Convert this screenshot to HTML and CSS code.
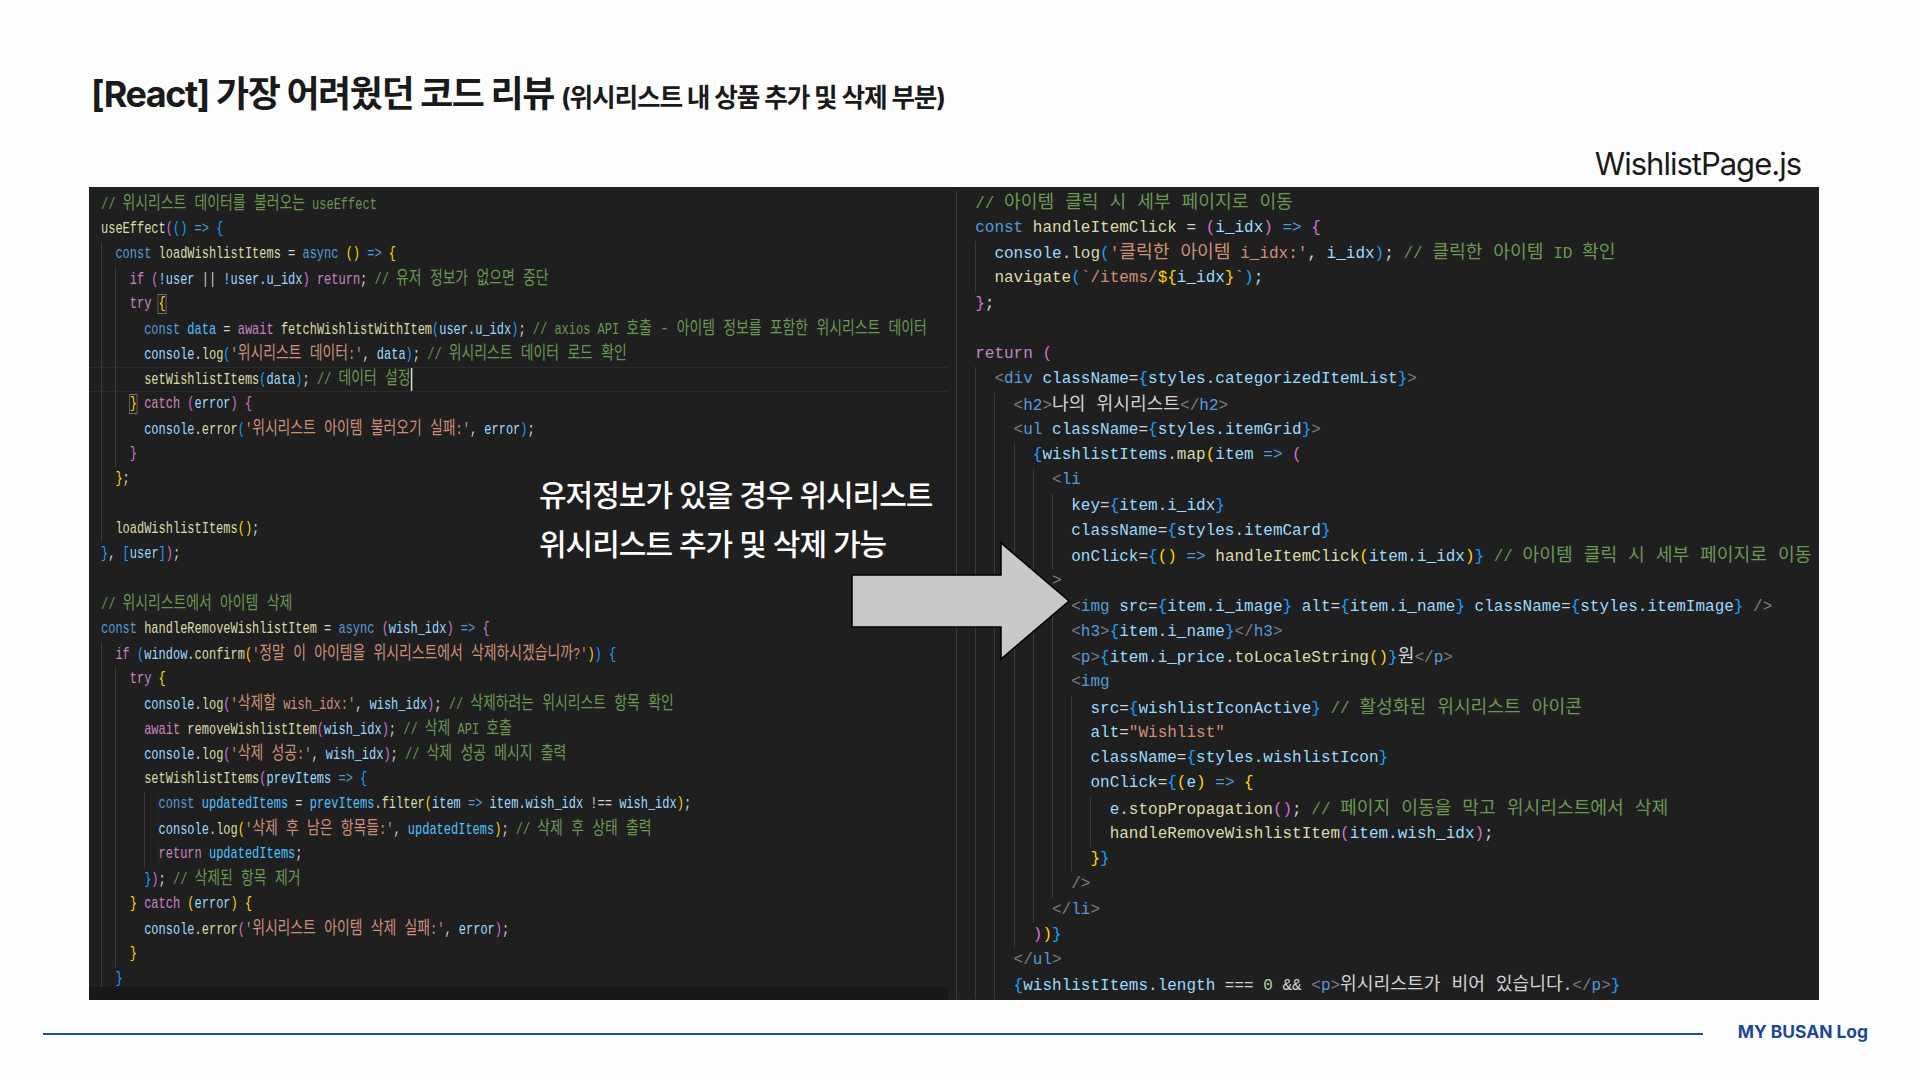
FILE: index.html
```html
<!DOCTYPE html>
<html lang="ko">
<head>
<meta charset="utf-8">
<title>[React] 가장 어려웠던 코드 리뷰</title>
<link rel="stylesheet" href="styles.css">
</head>
<body>
<div class="slide">
  <h1 class="title">[React] 가장 어려웠던 코드 리뷰 <small class="subtitle">(위시리스트 내 상품 추가 및 삭제 부분)</small></h1>
  <div class="file-name">WishlistPage.js</div>
  <div class="panel">
    <section class="pane-left">
      <div class="squeeze">
        <div class="code code-left">
<div class="l n0"><span class="c">// <span class="h">위시리스트 데이터를 불러오는</span> useEffect</span></div>
<div class="l n0"><span class="f">useEffect</span><span class="m">(</span><span class="b">()</span> <span class="k">=&gt;</span> <span class="b">{</span></div>
<div class="l n1"><span class="k">const</span> <span class="f">loadWishlistItems</span> = <span class="k">async</span> <span class="y">()</span> <span class="k">=&gt;</span> <span class="y">{</span></div>
<div class="l n2"><span class="p">if</span> <span class="m">(</span><span class="v">!user</span> || <span class="v">!user.u_idx</span><span class="m">)</span> <span class="p">return</span>; <span class="c">// <span class="h">유저 정보가 없으면 중단</span></span></div>
<div class="l n2"><span class="p">try</span> <span class="y box">{</span></div>
<div class="l n3"><span class="k">const</span> <span class="o">data</span> = <span class="p">await</span> <span class="f">fetchWishlistWithItem</span><span class="b">(</span><span class="v">user.u_idx</span><span class="b">)</span>; <span class="c">// axios API <span class="h">호출 - 아이템 정보를 포함한 위시리스트 데이터</span></span></div>
<div class="l n3"><span class="v">console</span>.<span class="f">log</span><span class="b">(</span><span class="s">'<span class="h">위시리스트 데이터</span>:'</span>, <span class="v">data</span><span class="b">)</span>; <span class="c">// <span class="h">위시리스트 데이터 로드 확인</span></span></div>
<div class="l n3 hl"><span class="f">setWishlistItems</span><span class="b">(</span><span class="v">data</span><span class="b">)</span>; <span class="c">// <span class="h">데이터 설정</span></span><span class="cursor"></span></div>
<div class="l n2"><span class="y box">}</span> <span class="p">catch</span> <span class="m">(</span><span class="v">error</span><span class="m">)</span> <span class="m">{</span></div>
<div class="l n3"><span class="v">console</span>.<span class="f">error</span><span class="b">(</span><span class="s">'<span class="h">위시리스트 아이템 불러오기 실패</span>:'</span>, <span class="v">error</span><span class="b">)</span>;</div>
<div class="l n2"><span class="m">}</span></div>
<div class="l n1"><span class="y">}</span>;</div>
<div class="l n1"></div>
<div class="l n1"><span class="f">loadWishlistItems</span><span class="y">()</span>;</div>
<div class="l n0"><span class="b">}</span>, <span class="b">[</span><span class="v">user</span><span class="b">]</span><span class="m">)</span>;</div>
<div class="l n0"></div>
<div class="l n0"><span class="c">// <span class="h">위시리스트에서 아이템 삭제</span></span></div>
<div class="l n0"><span class="k">const</span> <span class="f">handleRemoveWishlistItem</span> = <span class="k">async</span> <span class="m">(</span><span class="v">wish_idx</span><span class="m">)</span> <span class="k">=&gt;</span> <span class="m">{</span></div>
<div class="l n1"><span class="p">if</span> <span class="b">(</span><span class="v">window</span>.<span class="f">confirm</span><span class="y">(</span><span class="s">'<span class="h">정말 이 아이템을 위시리스트에서 삭제하시겠습니까</span>?'</span><span class="y">)</span><span class="b">)</span> <span class="b">{</span></div>
<div class="l n2"><span class="p">try</span> <span class="y">{</span></div>
<div class="l n3"><span class="v">console</span>.<span class="f">log</span><span class="m">(</span><span class="s">'<span class="h">삭제할</span> wish_idx:'</span>, <span class="v">wish_idx</span><span class="m">)</span>; <span class="c">// <span class="h">삭제하려는 위시리스트 항목 확인</span></span></div>
<div class="l n3"><span class="p">await</span> <span class="f">removeWishlistItem</span><span class="m">(</span><span class="v">wish_idx</span><span class="m">)</span>; <span class="c">// <span class="h">삭제</span> API <span class="h">호출</span></span></div>
<div class="l n3"><span class="v">console</span>.<span class="f">log</span><span class="m">(</span><span class="s">'<span class="h">삭제 성공</span>:'</span>, <span class="v">wish_idx</span><span class="m">)</span>; <span class="c">// <span class="h">삭제 성공 메시지 출력</span></span></div>
<div class="l n3"><span class="f">setWishlistItems</span><span class="m">(</span><span class="v">prevItems</span> <span class="k">=&gt;</span> <span class="b">{</span></div>
<div class="l n4"><span class="k">const</span> <span class="o">updatedItems</span> = <span class="o">prevItems</span>.<span class="f">filter</span><span class="y">(</span><span class="v">item</span> <span class="k">=&gt;</span> <span class="v">item.wish_idx</span> !== <span class="v">wish_idx</span><span class="y">)</span>;</div>
<div class="l n4"><span class="v">console</span>.<span class="f">log</span><span class="y">(</span><span class="s">'<span class="h">삭제 후 남은 항목들</span>:'</span>, <span class="o">updatedItems</span><span class="y">)</span>; <span class="c">// <span class="h">삭제 후 상태 출력</span></span></div>
<div class="l n4"><span class="p">return</span> <span class="o">updatedItems</span>;</div>
<div class="l n3"><span class="b">}</span><span class="m">)</span>; <span class="c">// <span class="h">삭제된 항목 제거</span></span></div>
<div class="l n2"><span class="y">}</span> <span class="p">catch</span> <span class="y">(</span><span class="v">error</span><span class="y">)</span> <span class="y">{</span></div>
<div class="l n3"><span class="v">console</span>.<span class="f">error</span><span class="m">(</span><span class="s">'<span class="h">위시리스트 아이템 삭제 실패</span>:'</span>, <span class="v">error</span><span class="m">)</span>;</div>
<div class="l n2"><span class="y">}</span></div>
<div class="l n1"><span class="b">}</span></div>
        </div>
      </div>
      <div class="scroll-strip"></div>
    </section>
    <section class="code code-right">
<div class="l n1"><span class="c">// <span class="h">아이템 클릭 시 세부 페이지로 이동</span></span></div>
<div class="l n1"><span class="k">const</span> <span class="f">handleItemClick</span> = <span class="m">(</span><span class="v">i_idx</span><span class="m">)</span> <span class="k">=&gt;</span> <span class="m">{</span></div>
<div class="l n2"><span class="v">console</span>.<span class="f">log</span><span class="b">(</span><span class="s">'<span class="h">클릭한 아이템</span> i_idx:'</span>, <span class="v">i_idx</span><span class="b">)</span>; <span class="c">// <span class="h">클릭한 아이템</span> ID <span class="h">확인</span></span></div>
<div class="l n2"><span class="f">navigate</span><span class="b">(</span><span class="s">`/items/</span><span class="y">${</span><span class="v">i_idx</span><span class="y">}</span><span class="s">`</span><span class="b">)</span>;</div>
<div class="l n1"><span class="m">}</span>;</div>
<div class="l n1"></div>
<div class="l n1"><span class="p">return</span> <span class="m">(</span></div>
<div class="l n2"><span class="g">&lt;</span><span class="k">div</span> <span class="v">className</span>=<span class="b">{</span><span class="v">styles.categorizedItemList</span><span class="b">}</span><span class="g">&gt;</span></div>
<div class="l n3"><span class="g">&lt;</span><span class="k">h2</span><span class="g">&gt;</span><span class="h">나의 위시리스트</span><span class="g">&lt;/</span><span class="k">h2</span><span class="g">&gt;</span></div>
<div class="l n3"><span class="g">&lt;</span><span class="k">ul</span> <span class="v">className</span>=<span class="b">{</span><span class="v">styles.itemGrid</span><span class="b">}</span><span class="g">&gt;</span></div>
<div class="l n4"><span class="b">{</span><span class="v">wishlistItems</span>.<span class="f">map</span><span class="y">(</span><span class="v">item</span> <span class="k">=&gt;</span> <span class="m">(</span></div>
<div class="l n5"><span class="g">&lt;</span><span class="k">li</span></div>
<div class="l n6"><span class="v">key</span>=<span class="b">{</span><span class="v">item.i_idx</span><span class="b">}</span></div>
<div class="l n6"><span class="v">className</span>=<span class="b">{</span><span class="v">styles.itemCard</span><span class="b">}</span></div>
<div class="l n6"><span class="v">onClick</span>=<span class="b">{</span><span class="y">()</span> <span class="k">=&gt;</span> <span class="f">handleItemClick</span><span class="y">(</span><span class="v">item.i_idx</span><span class="y">)</span><span class="b">}</span> <span class="c">// <span class="h">아이템 클릭 시 세부 페이지로 이동</span></span></div>
<div class="l n5"><span class="g">&gt;</span></div>
<div class="l n6"><span class="g">&lt;</span><span class="k">img</span> <span class="v">src</span>=<span class="b">{</span><span class="v">item.i_image</span><span class="b">}</span> <span class="v">alt</span>=<span class="b">{</span><span class="v">item.i_name</span><span class="b">}</span> <span class="v">className</span>=<span class="b">{</span><span class="v">styles.itemImage</span><span class="b">}</span> <span class="g">/&gt;</span></div>
<div class="l n6"><span class="g">&lt;</span><span class="k">h3</span><span class="g">&gt;</span><span class="b">{</span><span class="v">item.i_name</span><span class="b">}</span><span class="g">&lt;/</span><span class="k">h3</span><span class="g">&gt;</span></div>
<div class="l n6"><span class="g">&lt;</span><span class="k">p</span><span class="g">&gt;</span><span class="b">{</span><span class="v">item.i_price</span>.<span class="f">toLocaleString</span><span class="y">()</span><span class="b">}</span><span class="h">원</span><span class="g">&lt;/</span><span class="k">p</span><span class="g">&gt;</span></div>
<div class="l n6"><span class="g">&lt;</span><span class="k">img</span></div>
<div class="l n7"><span class="v">src</span>=<span class="b">{</span><span class="v">wishlistIconActive</span><span class="b">}</span> <span class="c">// <span class="h">활성화된 위시리스트 아이콘</span></span></div>
<div class="l n7"><span class="v">alt</span>=<span class="s">"Wishlist"</span></div>
<div class="l n7"><span class="v">className</span>=<span class="b">{</span><span class="v">styles.wishlistIcon</span><span class="b">}</span></div>
<div class="l n7"><span class="v">onClick</span>=<span class="b">{</span><span class="y">(</span><span class="v">e</span><span class="y">)</span> <span class="k">=&gt;</span> <span class="y">{</span></div>
<div class="l n8"><span class="v">e</span>.<span class="f">stopPropagation</span><span class="m">()</span>; <span class="c">// <span class="h">페이지 이동을 막고 위시리스트에서 삭제</span></span></div>
<div class="l n8"><span class="f">handleRemoveWishlistItem</span><span class="m">(</span><span class="v">item.wish_idx</span><span class="m">)</span>;</div>
<div class="l n7"><span class="y">}</span><span class="b">}</span></div>
<div class="l n6"><span class="g">/&gt;</span></div>
<div class="l n5"><span class="g">&lt;/</span><span class="k">li</span><span class="g">&gt;</span></div>
<div class="l n4"><span class="m">)</span><span class="y">)</span><span class="b">}</span></div>
<div class="l n3"><span class="g">&lt;/</span><span class="k">ul</span><span class="g">&gt;</span></div>
<div class="l n3"><span class="b">{</span><span class="v">wishlistItems.length</span> === <span class="n">0</span> &amp;&amp; <span class="g">&lt;</span><span class="k">p</span><span class="g">&gt;</span><span class="h">위시리스트가 비어 있습니다</span>.<span class="g">&lt;/</span><span class="k">p</span><span class="g">&gt;</span><span class="b">}</span></div>
    </section>
    <p class="callout">유저정보가 있을 경우 위시리스트<br>위시리스트 추가 및 삭제 가능</p>
    <svg class="arrow" width="220" height="120" viewBox="0 0 220 120" aria-hidden="true">
      <polygon points="1,34 150,34 150,2 218,60 150,118 150,86 1,86" fill="#c9c9c9" stroke="#000" stroke-width="1.5"/>
    </svg>
  </div>
  <footer class="footer">
    <div class="footer-line"></div>
    <div class="brand">MY BUSAN Log</div>
  </footer>
</div>
</body>
</html>
```
FILE: styles.css
```css
* { box-sizing: border-box; }
html, body { margin: 0; padding: 0; }
body { background: #fdfdfd; }

.slide {
  width: 1920px;
  height: 1080px;
  overflow: hidden;
  display: flex;
  flex-direction: column;
  padding-top: 71px;
  font-family: Inter, "Noto Sans CJK KR", sans-serif;
  color: #1a1a1a;
}

.title {
  margin: 0 0 0 91px;
  height: 46px;
  font-size: 36px;
  line-height: 46px;
  font-weight: 700;
  letter-spacing: -1.45px;
  white-space: nowrap;
}
.subtitle {
  font-size: 25.7px;
  font-weight: 700;
  letter-spacing: -1.15px;
}

.file-name {
  margin: 24px 119px 0 0;
  height: 46px;
  text-align: right;
  font-size: 31px;
  line-height: 46px;
  font-weight: 400;
  letter-spacing: -1px;
}

.panel {
  position: relative;
  display: flex;
  flex: none;
  margin-left: 89px;
  width: 1730px;
  height: 813px;
  background: #1f1f1f;
}

.pane-left {
  width: 867px;
  display: flex;
  flex-direction: column;
  flex: none;
}
.squeeze {
  height: 800px;
  overflow: hidden;
}
.scroll-strip {
  width: 859px;
  height: 13px;
  background: #181818;
}

.code {
  font-family: "Liberation Mono", "Noto Sans CJK KR", monospace;
  color: #d4d4d4;
}
.code-left {
  --pad: 16.1px;
  --row: 25px;
  --hangul: 18.6px;
  font-size: 16.1px;
  width: 1153px;
  padding-top: 4.5px;
  transform: scaleX(.745);
  transform-origin: 0 0;
}
.code-right {
  --pad: 0px;
  --row: 25.25px;
  --hangul: 18.2px;
  font-size: 16px;
  flex: 1;
  min-width: 0;
  overflow: hidden;
  padding-top: 3.5px;
}

.l {
  height: var(--row);
  line-height: var(--row);
  white-space: pre;
  padding-left: calc(var(--pad) + var(--n) * 2ch);
  background-image: repeating-linear-gradient(90deg, #3d3d3d 0 1px, transparent 1px 2ch);
  background-repeat: no-repeat;
  background-position: var(--pad) 0;
  background-size: calc(var(--n) * 2ch) 100%;
}
.n0 { --n: 0; }
.n1 { --n: 1; }
.n2 { --n: 2; }
.n3 { --n: 3; }
.n4 { --n: 4; }
.n5 { --n: 5; }
.n6 { --n: 6; }
.n7 { --n: 7; }
.n8 { --n: 8; }

.hl {
  border-top: 1px solid #2b2b2b;
  border-bottom: 1px solid #2b2b2b;
  line-height: 23px;
}
.cursor {
  display: inline-block;
  width: 2px;
  height: 23px;
  vertical-align: top;
  background: #d8d8d8;
}
.box { outline: 1px solid #777; outline-offset: 0; }

.h { font-size: var(--hangul); }
.c { color: #6a9955; }
.k { color: #569cd6; }
.p { color: #c586c0; }
.f { color: #dcdcaa; }
.v { color: #9cdcfe; }
.o { color: #4fc1ff; }
.s { color: #ce9178; }
.n { color: #b5cea8; }
.g { color: #808080; }
.y { color: #ffd700; }
.m { color: #da70d6; }
.b { color: #179fff; }

.callout {
  position: absolute;
  left: 450px;
  top: 284px;
  margin: 0;
  color: #fff;
  font-size: 30px;
  line-height: 49px;
  font-weight: 500;
  letter-spacing: -1px;
  white-space: nowrap;
}
.arrow {
  position: absolute;
  left: 762px;
  top: 354px;
}

.footer {
  display: flex;
  align-items: center;
  margin-top: 21px;
  padding: 0 52px 0 43px;
  gap: 35px;
}
.footer-line {
  flex: 1;
  height: 2px;
  margin-top: 4px;
  background: #1f4e9e;
}
.brand {
  font-size: 17.4px;
  line-height: 22px;
  font-weight: 700;
  color: #1c4896;
  white-space: nowrap;
}
```
